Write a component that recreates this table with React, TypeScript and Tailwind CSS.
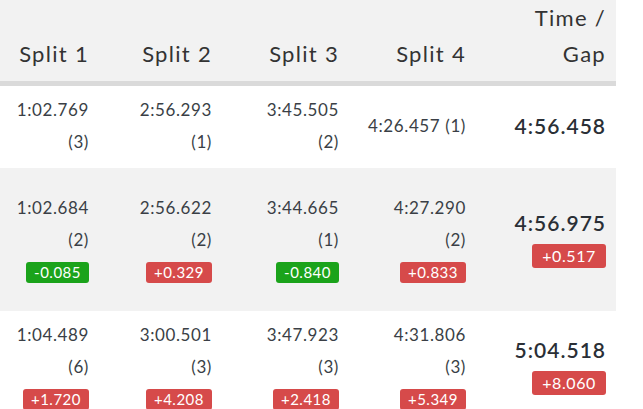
import React from "react";

type Split = { t: string; r: string; d?: string; pos?: boolean };
type Row = { splits: Split[]; time: string; gap?: string; inline4?: boolean };

const rows: Row[] = [
  {
    splits: [
      { t: "1:02.769", r: "(3)" },
      { t: "2:56.293", r: "(1)" },
      { t: "3:45.505", r: "(2)" },
      { t: "4:26.457", r: "(1)" },
    ],
    time: "4:56.458",
    inline4: true,
  },
  {
    splits: [
      { t: "1:02.684", r: "(2)", d: "-0.085", pos: false },
      { t: "2:56.622", r: "(2)", d: "+0.329", pos: true },
      { t: "3:44.665", r: "(1)", d: "-0.840", pos: false },
      { t: "4:27.290", r: "(2)", d: "+0.833", pos: true },
    ],
    time: "4:56.975",
    gap: "+0.517",
  },
  {
    splits: [
      { t: "1:04.489", r: "(6)", d: "+1.720", pos: true },
      { t: "3:00.501", r: "(3)", d: "+4.208", pos: true },
      { t: "3:47.923", r: "(3)", d: "+2.418", pos: true },
      { t: "4:31.806", r: "(3)", d: "+5.349", pos: true },
    ],
    time: "5:04.518",
    gap: "+8.060",
  },
];

const rowCls = [
  "h-[82px] bg-white pb-[2px]",
  "h-[143px] bg-[#f2f2f2] pb-[4px]",
  "h-[107px] bg-white",
];

function Badge({ v, pos, big }: { v: string; pos?: boolean; big?: boolean }) {
  return (
    <span
      className={
        "inline-block rounded-[3px] text-white " +
        (pos ? "bg-[#d64a4a] " : "bg-[#1ba31b] ") +
        (big
          ? "h-[24px] px-[10px] text-[16px] leading-[24px] tracking-[0.6px]"
          : "h-[21px] px-[8px] text-[15px] leading-[21px] tracking-[0.5px]")
      }
    >
      {v}
    </span>
  );
}

export default function App() {
  return (
    <div
      className="w-[643px] h-[409px] overflow-hidden bg-white text-[#3a3f46]"
      style={{ fontFamily: "Lato, 'Open Sans', sans-serif" }}
    >
      <div className="w-[616px]">
        <div className="grid grid-cols-[99px_123px_127px_127px_140px] items-end h-[86px] bg-[#f2f2f2] pb-[9px] text-[22px] leading-[36px] text-[#333333] tracking-[1.3px] border-b-[5px] border-[#dadada]">
          <div className="px-[10px] text-right">Split 1</div>
          <div className="px-[10px] text-right">Split 2</div>
          <div className="px-[10px] text-right">Split 3</div>
          <div className="px-[10px] text-right">Split 4</div>
          <div className="px-[10px] text-right">
            Time /
            <br />
            Gap
          </div>
        </div>
        {rows.map((row, i) => (
          <div
            key={i}
            className={
              "grid grid-cols-[99px_123px_127px_127px_140px] items-center " +
              rowCls[i]
            }
          >
            {row.splits.map((s, j) => (
              <div
                key={j}
                className="px-[10px] text-right text-[17px] tracking-[0.6px]"
              >
                {row.inline4 && j === 3 ? (
                  <div className="leading-[32px]">
                    {s.t} {s.r}
                  </div>
                ) : (
                  <>
                    <div className="leading-[32px]">{s.t}</div>
                    <div className="leading-[32px]">{s.r}</div>
                    {s.d && (
                      <div className="mt-[6px] flex justify-end">
                        <Badge v={s.d} pos={s.pos} />
                      </div>
                    )}
                  </>
                )}
              </div>
            ))}
            <div className="px-[10px] text-right">
              <div className="text-[21px] leading-[30px] font-semibold tracking-[1px] text-[#2a2f36]">
                {row.time}
              </div>
              {row.gap && (
                <div className="mt-[6px] flex justify-end">
                  <Badge v={row.gap} pos big />
                </div>
              )}
            </div>
          </div>
        ))}
      </div>
    </div>
  );
}
